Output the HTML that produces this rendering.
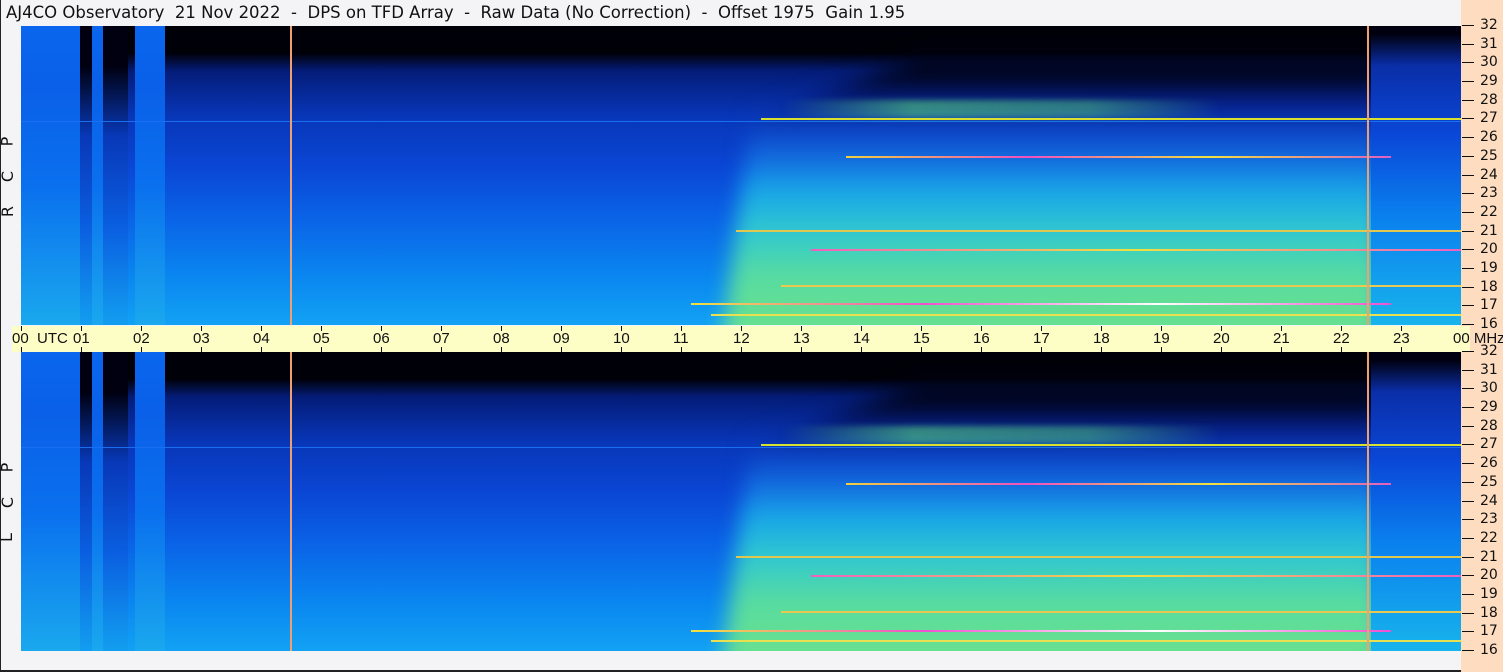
<!DOCTYPE html>
<html><head><meta charset="utf-8"><style>
*{margin:0;padding:0;box-sizing:border-box}
body{width:1503px;height:672px;position:relative;background:#f4f4f6;font-family:"DejaVu Sans","Liberation Sans",sans-serif;overflow:hidden}
.frame{position:absolute;left:0;top:0;width:1503px;height:672px;border-left:1px solid #222;border-bottom:2px solid #222}
.title{position:absolute;left:6px;top:3px;font-size:16.5px;color:#111;white-space:pre}
.right{position:absolute;left:1461px;top:0;width:42px;height:672px;background:#fddcbf}
.panel{position:absolute;left:21px;width:1440px;height:299px;overflow:hidden;
background:linear-gradient(to bottom,#000008 0,#000008 27px,#041c78 45px,#0836b8 90px,#0a46d4 140px,#0a62e6 190px,#0a86f0 250px,#12a2f4 299px)}
.p1{top:26px}.p2{top:352px}
.panel div{position:absolute}
.col{top:0;height:299px;background:linear-gradient(to bottom,#0a66ee 0,#0a60e8 60px,#0a70ee 160px,#1aa8ee 299px)}
.blk{top:0;height:100%}
.gw{left:0;top:0;width:1440px;height:299px;filter:blur(10px)}
.green{left:0;top:0;width:1440px;height:330px;clip-path:polygon(900px 30px,1360px 30px,1360px 330px,700px 330px,715px 200px,730px 90px);
background:linear-gradient(to bottom,#000010 0,#000418 50px,#061e88 75px,#0c44c8 105px,#1470e0 135px,#18a6e8 165px,#30c8d0 205px,#58dca0 250px,#68e090 299px)}
.rside{left:1350px;top:0;width:90px;height:299px;background:linear-gradient(to bottom,#000010 0,#000010 8px,#0a2ea8 40px,#0a48d8 110px,#0a80ee 190px,#18b4ec 299px)}
.ln{height:2px}
.vl{top:0;width:2px;height:299px;background:#f0a070}
.axis{position:absolute;left:12px;top:326px;width:1458px;height:26px;background:#fdfdc6}
.tk{position:absolute;width:1px;height:5px;background:#111}
.hl{position:absolute;top:4px;font-family:"Liberation Sans",sans-serif;font-size:15px;color:#111;white-space:nowrap}
.mz{position:absolute;left:1466px;font-size:14px;color:#111;white-space:nowrap}
.mz:before{content:"";position:absolute;left:-4px;top:8px;width:12px;height:1px;background:#111}
.mz span{margin-left:14px}
.lab{position:absolute;left:2px;font-size:16px;color:#111;transform:rotate(-90deg)}
</style></head><body>
<div class="frame"></div>
<div class="right"></div>
<div class="title">AJ4CO Observatory  21 Nov 2022  -  DPS on TFD Array  -  Raw Data (No Correction)  -  Offset 1975  Gain 1.95</div>

<div class="panel p1">
 <div class="col" style="left:0;width:59px"></div>
 <div class="blk" style="left:59px;width:12px;background:linear-gradient(#000010 0,#000010 40px,#0838b8 110px,#0a5ee0 200px,#129ef0 299px)"></div>
 <div class="col" style="left:71px;width:11px"></div>
 <div class="blk" style="left:82px;width:25px;background:linear-gradient(#000010 0,#000010 40px,#0838b8 110px,#0a5ee0 200px,#129ef0 299px)"></div>
 <div class="col" style="left:114px;width:30px"></div>
 <div class="gw"><div class="green"></div></div>
 <div class="rside"></div>
 <div style="left:0;top:95px;width:1440px;height:1px;background:#1a6ef0"></div>
 <div style="left:760px;top:74px;width:440px;height:18px;background:linear-gradient(90deg,rgba(60,200,160,0),rgba(90,220,120,.55) 30%,rgba(90,220,120,.45) 70%,rgba(60,200,160,0));filter:blur(3px)"></div>
 <div class="ln" style="left:740px;top:92px;width:700px;background:#d8e030"></div>
 <div class="ln" style="left:825px;top:130px;width:545px;background:linear-gradient(90deg,#f0d040,#f050c0,#f0e040,#e060c0)"></div>
 <div class="ln" style="left:715px;top:204px;width:725px;background:#e0c850"></div>
 <div class="ln" style="left:790px;top:223px;width:650px;background:linear-gradient(90deg,#f060c0,#f0e040,#f060c0)"></div>
 <div class="ln" style="left:760px;top:259px;width:680px;background:#e8c850"></div>
 <div class="ln" style="left:670px;top:277px;width:700px;background:linear-gradient(90deg,#f0e040,#f050d0,#ffffff,#f050d0)"></div>
 <div class="ln" style="left:690px;top:288px;width:750px;background:#e8e050"></div>
 <div class="vl" style="left:269px"></div>
 <div class="vl" style="left:1346px"></div>
</div>

<div class="panel p2">
 <div class="col" style="left:0;width:59px"></div>
 <div class="blk" style="left:59px;width:12px;background:linear-gradient(#000010 0,#000010 40px,#0838b8 110px,#0a5ee0 200px,#129ef0 299px)"></div>
 <div class="col" style="left:71px;width:11px"></div>
 <div class="blk" style="left:82px;width:25px;background:linear-gradient(#000010 0,#000010 40px,#0838b8 110px,#0a5ee0 200px,#129ef0 299px)"></div>
 <div class="col" style="left:114px;width:30px"></div>
 <div class="gw"><div class="green"></div></div>
 <div class="rside"></div>
 <div style="left:0;top:95px;width:1440px;height:1px;background:#1a6ef0"></div>
 <div style="left:760px;top:74px;width:440px;height:18px;background:linear-gradient(90deg,rgba(60,200,160,0),rgba(90,220,120,.55) 30%,rgba(90,220,120,.45) 70%,rgba(60,200,160,0));filter:blur(3px)"></div>
 <div class="ln" style="left:740px;top:92px;width:700px;background:#d8e030"></div>
 <div class="ln" style="left:825px;top:131px;width:545px;background:linear-gradient(90deg,#f0d040,#f050c0,#f0e040,#e060c0)"></div>
 <div class="ln" style="left:715px;top:204px;width:725px;background:#e0c850"></div>
 <div class="ln" style="left:790px;top:223px;width:650px;background:linear-gradient(90deg,#f060c0,#f0e040,#f060c0)"></div>
 <div class="ln" style="left:760px;top:259px;width:680px;background:#e8c850"></div>
 <div class="ln" style="left:670px;top:278px;width:700px;background:linear-gradient(90deg,#f0e040,#f050d0,#ffffff,#f050d0)"></div>
 <div class="ln" style="left:690px;top:288px;width:750px;background:#e8e050"></div>
 <div class="vl" style="left:269px"></div>
 <div class="vl" style="left:1346px"></div>
</div>

<div class="axis">
 <div class="hl" style="left:0">00&nbsp; UTC</div>
 <div class="hl" style="left:61px">01</div><div class="hl" style="left:121px">02</div><div class="hl" style="left:181px">03</div><div class="hl" style="left:241px">04</div><div class="hl" style="left:301px">05</div><div class="hl" style="left:361px">06</div><div class="hl" style="left:421px">07</div><div class="hl" style="left:481px">08</div><div class="hl" style="left:541px">09</div><div class="hl" style="left:601px">10</div><div class="hl" style="left:661px">11</div><div class="hl" style="left:721px">12</div><div class="hl" style="left:781px">13</div><div class="hl" style="left:841px">14</div><div class="hl" style="left:901px">15</div><div class="hl" style="left:961px">16</div><div class="hl" style="left:1021px">17</div><div class="hl" style="left:1081px">18</div><div class="hl" style="left:1141px">19</div><div class="hl" style="left:1201px">20</div><div class="hl" style="left:1261px">21</div><div class="hl" style="left:1321px">22</div><div class="hl" style="left:1381px">23</div><div class="hl" style="left:1441px">00 MHz</div>
</div>
<div style="position:absolute;left:0;top:0">
<div class="tk" style="left:21px;top:326px"></div><div class="tk" style="left:21px;top:347px"></div>
<div class="tk" style="left:81px;top:326px"></div><div class="tk" style="left:81px;top:347px"></div>
<div class="tk" style="left:141px;top:326px"></div><div class="tk" style="left:141px;top:347px"></div>
<div class="tk" style="left:201px;top:326px"></div><div class="tk" style="left:201px;top:347px"></div>
<div class="tk" style="left:261px;top:326px"></div><div class="tk" style="left:261px;top:347px"></div>
<div class="tk" style="left:321px;top:326px"></div><div class="tk" style="left:321px;top:347px"></div>
<div class="tk" style="left:381px;top:326px"></div><div class="tk" style="left:381px;top:347px"></div>
<div class="tk" style="left:441px;top:326px"></div><div class="tk" style="left:441px;top:347px"></div>
<div class="tk" style="left:501px;top:326px"></div><div class="tk" style="left:501px;top:347px"></div>
<div class="tk" style="left:561px;top:326px"></div><div class="tk" style="left:561px;top:347px"></div>
<div class="tk" style="left:621px;top:326px"></div><div class="tk" style="left:621px;top:347px"></div>
<div class="tk" style="left:681px;top:326px"></div><div class="tk" style="left:681px;top:347px"></div>
<div class="tk" style="left:741px;top:326px"></div><div class="tk" style="left:741px;top:347px"></div>
<div class="tk" style="left:801px;top:326px"></div><div class="tk" style="left:801px;top:347px"></div>
<div class="tk" style="left:861px;top:326px"></div><div class="tk" style="left:861px;top:347px"></div>
<div class="tk" style="left:921px;top:326px"></div><div class="tk" style="left:921px;top:347px"></div>
<div class="tk" style="left:981px;top:326px"></div><div class="tk" style="left:981px;top:347px"></div>
<div class="tk" style="left:1041px;top:326px"></div><div class="tk" style="left:1041px;top:347px"></div>
<div class="tk" style="left:1101px;top:326px"></div><div class="tk" style="left:1101px;top:347px"></div>
<div class="tk" style="left:1161px;top:326px"></div><div class="tk" style="left:1161px;top:347px"></div>
<div class="tk" style="left:1221px;top:326px"></div><div class="tk" style="left:1221px;top:347px"></div>
<div class="tk" style="left:1281px;top:326px"></div><div class="tk" style="left:1281px;top:347px"></div>
<div class="tk" style="left:1341px;top:326px"></div><div class="tk" style="left:1341px;top:347px"></div>
<div class="tk" style="left:1401px;top:326px"></div><div class="tk" style="left:1401px;top:347px"></div>
</div>

<div class="mz" style="top:17px"><span>32</span></div>
<div class="mz" style="top:36px"><span>31</span></div>
<div class="mz" style="top:54px"><span>30</span></div>
<div class="mz" style="top:73px"><span>29</span></div>
<div class="mz" style="top:92px"><span>28</span></div>
<div class="mz" style="top:110px"><span>27</span></div>
<div class="mz" style="top:129px"><span>26</span></div>
<div class="mz" style="top:148px"><span>25</span></div>
<div class="mz" style="top:167px"><span>24</span></div>
<div class="mz" style="top:185px"><span>23</span></div>
<div class="mz" style="top:204px"><span>22</span></div>
<div class="mz" style="top:223px"><span>21</span></div>
<div class="mz" style="top:241px"><span>20</span></div>
<div class="mz" style="top:260px"><span>19</span></div>
<div class="mz" style="top:279px"><span>18</span></div>
<div class="mz" style="top:297px"><span>17</span></div>
<div class="mz" style="top:316px"><span>16</span></div>

<div class="mz" style="top:343px"><span>32</span></div>
<div class="mz" style="top:362px"><span>31</span></div>
<div class="mz" style="top:380px"><span>30</span></div>
<div class="mz" style="top:399px"><span>29</span></div>
<div class="mz" style="top:418px"><span>28</span></div>
<div class="mz" style="top:436px"><span>27</span></div>
<div class="mz" style="top:455px"><span>26</span></div>
<div class="mz" style="top:474px"><span>25</span></div>
<div class="mz" style="top:493px"><span>24</span></div>
<div class="mz" style="top:511px"><span>23</span></div>
<div class="mz" style="top:530px"><span>22</span></div>
<div class="mz" style="top:549px"><span>21</span></div>
<div class="mz" style="top:567px"><span>20</span></div>
<div class="mz" style="top:586px"><span>19</span></div>
<div class="mz" style="top:605px"><span>18</span></div>
<div class="mz" style="top:623px"><span>17</span></div>
<div class="mz" style="top:642px"><span>16</span></div>

<div class="lab" style="top:132px">P</div>
<div class="lab" style="top:167px">C</div>
<div class="lab" style="top:202px">R</div>
<div class="lab" style="top:458px">P</div>
<div class="lab" style="top:493px">C</div>
<div class="lab" style="top:528px">L</div>
</body></html>
